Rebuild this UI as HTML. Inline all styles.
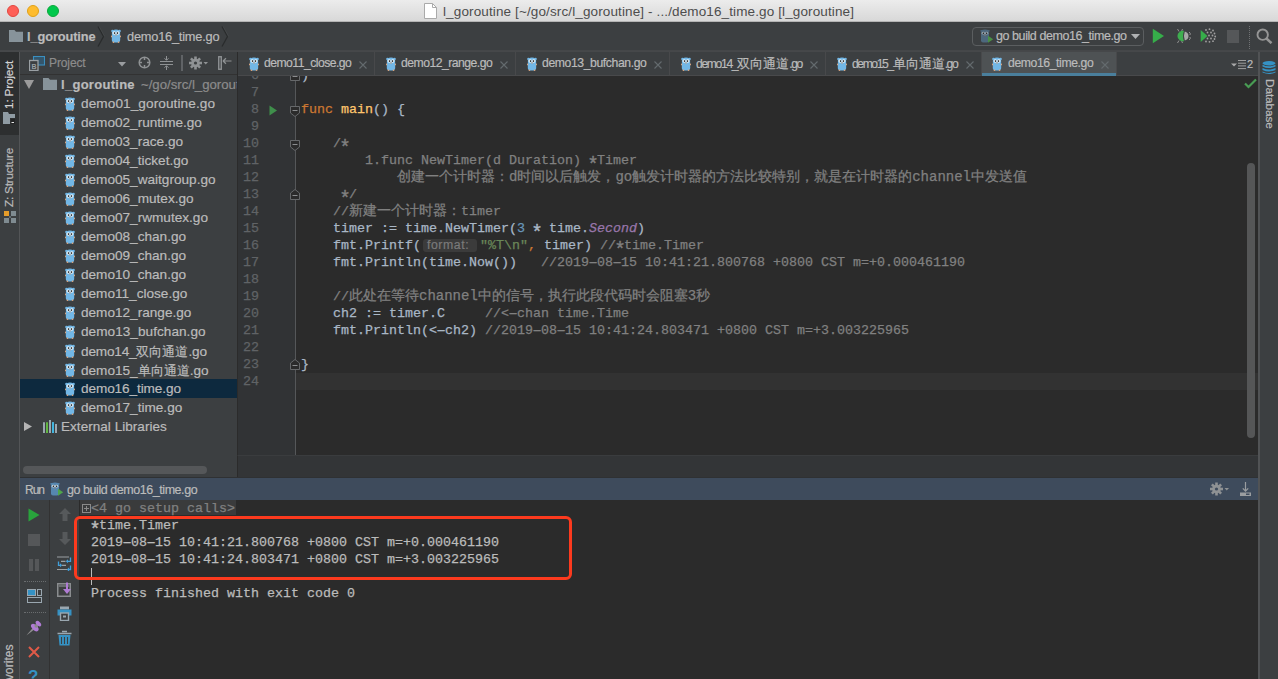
<!DOCTYPE html><html><head><meta charset="utf-8"><style>
*{margin:0;padding:0;box-sizing:border-box}
html,body{width:1278px;height:679px;overflow:hidden;background:#3c3f41;font-family:"Liberation Sans",sans-serif;font-size:13px;color:#bbbbbb}
.a{position:absolute}
.m{font-family:"Liberation Mono",monospace;font-size:13.33px;white-space:pre;-webkit-text-stroke:0.25px}
.nw{white-space:nowrap;-webkit-text-stroke:0.2px}
#title{left:0;top:0;width:1278px;height:22px;background:linear-gradient(#ececec,#d8d8d8);border-bottom:1px solid #b4b4b4}
.tl{width:12px;height:12px;border-radius:50%;top:5px}
#nav{left:0;top:22px;width:1278px;height:29px;background:#3c3f41;border-bottom:1px solid #454749}
#lstrip{left:0;top:51px;width:20px;height:628px;background:#3c3f41;border-right:1px solid #535557}
#proj{left:20px;top:51px;width:218px;height:427px;background:#3c3f41;border-right:1px solid #2b2b2b;overflow:hidden}
#tabs{left:238px;top:51px;width:1020px;height:25px;background:#3c3f41;border-bottom:1px solid #48494b}
#gutter{left:238px;top:76px;width:58px;height:379px;background:#313335;overflow:hidden}
#editor{left:296px;top:76px;width:962px;height:379px;background:#2b2b2b;overflow:hidden}
#edbottom{left:237px;top:455px;width:1021px;height:23px;background:#333537;border-top:1px solid #3a3c3e;border-left:1px solid #2b2b2b}
#rstrip{left:1258px;top:51px;width:20px;height:628px;background:#3c3f41;border-left:2px solid #515355}
#runhdr{left:20px;top:477px;width:1238px;height:23px;background:#3e4b5c;border-top:1px solid #2f3133}
#runtb1{left:20px;top:500px;width:30px;height:179px;background:#3c3f41;border-right:1px solid #323232}
#runtb2{left:50px;top:500px;width:29px;height:179px;background:#3c3f41}
#console{left:79px;top:500px;width:1179px;height:179px;background:#2b2b2b;overflow:hidden}
.kw{color:#cc7832}.fn{color:#ffc66d}.tx{color:#a9b7c6}.cm{color:#808080}.nu{color:#6897bb}.st{color:#6a8759}.it{color:#9876aa;font-style:italic}
.cjk{font-size:14px}
.ast{display:inline-block;width:8px;text-align:center;transform:translateY(5.5px) scale(1.45)}
.hy{display:inline-block;width:8px;text-align:center;transform:scaleX(1.9)}
</style></head><body>
<svg width="0" height="0" style="position:absolute"><defs><symbol id="g" viewBox="0 0 10 14">
<circle cx="1.4" cy="1.9" r="1.2" fill="#72b7e6"/><circle cx="8.6" cy="1.9" r="1.2" fill="#72b7e6"/>
<path d="M0.9 3.2Q0.9 0.4 5 0.4Q9.1 0.4 9.1 3.2L9.2 11Q9.2 13.6 5 13.6Q0.8 13.6 0.8 11Z" fill="#72b7e6"/>
<circle cx="3.2" cy="4" r="1.7" fill="#eef6fb"/><circle cx="6.8" cy="4" r="1.7" fill="#eef6fb"/>
<circle cx="3.5" cy="4.1" r="0.8" fill="#151515"/><circle cx="6.5" cy="4.1" r="0.8" fill="#151515"/>
<ellipse cx="5" cy="5.9" rx="1" ry="0.7" fill="#c9a58a"/>
<rect x="0" y="6.6" width="1.1" height="1.6" rx="0.5" fill="#d9a57f"/><rect x="8.9" y="6.6" width="1.1" height="1.6" rx="0.5" fill="#d9a57f"/>
<rect x="1.6" y="12.5" width="1.6" height="1.4" rx="0.6" fill="#d9a57f"/><rect x="6.8" y="12.5" width="1.6" height="1.4" rx="0.6" fill="#d9a57f"/>
</symbol>
<symbol id="gd" viewBox="0 0 14 14">
<path d="M1 2.4Q1 0.4 5 0.4Q9 0.4 9 2.4V11.4Q9 13.6 5 13.6Q1 13.6 1 11.4Z" fill="#4d687d"/>
<circle cx="1.2" cy="1.8" r="0.9" fill="#4d687d"/><circle cx="8.8" cy="1.8" r="0.9" fill="#4d687d"/>
<ellipse cx="3.3" cy="4.2" rx="1.6" ry="1.4" fill="#9aa6ae"/><ellipse cx="6.7" cy="4.2" rx="1.6" ry="1.4" fill="#9aa6ae"/>
<circle cx="3.4" cy="4.3" r="0.7" fill="#1a1a1a"/><circle cx="6.6" cy="4.3" r="0.7" fill="#1a1a1a"/>
<rect x="4.2" y="5.4" width="1.6" height="1.1" rx="0.5" fill="#9a8070"/>
<path d="M8 6.8L13.2 10.3L8 13.8Z" fill="#4a8f45"/>
</symbol>
<symbol id="gr" viewBox="0 0 14 14">
<path d="M1 2.4Q1 0.4 5 0.4Q9 0.4 9 2.4V11.4Q9 13.6 5 13.6Q1 13.6 1 11.4Z" fill="#5687b0"/>
<circle cx="1.2" cy="1.8" r="0.9" fill="#5687b0"/><circle cx="8.8" cy="1.8" r="0.9" fill="#5687b0"/>
<ellipse cx="3.3" cy="4.2" rx="1.6" ry="1.4" fill="#c8d4dc"/><ellipse cx="6.7" cy="4.2" rx="1.6" ry="1.4" fill="#c8d4dc"/>
<circle cx="3.4" cy="4.3" r="0.7" fill="#1a1a1a"/><circle cx="6.6" cy="4.3" r="0.7" fill="#1a1a1a"/>
<rect x="4.2" y="5.4" width="1.6" height="1.1" rx="0.5" fill="#9a8070"/>
<path d="M8 6.8L13.2 10.3L8 13.8Z" fill="#4fa64a"/>
</symbol>
<symbol id="folder" viewBox="0 0 14 12">
<path d="M0 0H5.5L7 1.8H14V12H0Z" fill="#87939a"/>
</symbol></defs></svg>
<div id="title" class="a">
<div class="a tl" style="left:7px;background:#fe5f57;border:0.5px solid #e2463f"></div>
<div class="a tl" style="left:27px;background:#febc2e;border:0.5px solid #e1a116"></div>
<div class="a tl" style="left:47px;background:#00c84b;border:0.5px solid #0ba73a"></div>
<svg class="a" style="left:424px;top:3px" width="13" height="16" viewBox="0 0 13 16"><path d="M0.5 0.5H8.5L12.5 4.5V15.5H0.5Z" fill="#fff" stroke="#aaa"/><path d="M8.5 0.5V4.5H12.5" fill="none" stroke="#aaa"/></svg>

<div id="f0" class="a nw" style="left:443px;top:4px;font-size:13.5px;color:#4d4d4d;-webkit-text-stroke:0;letter-spacing:0.123px">l_goroutine [~/go/src/l_goroutine] - .../demo16_time.go [l_goroutine]</div>
</div>
<div id="nav" class="a">
<svg class="a" style="left:9px;top:8px" width="14" height="12"><use href="#folder"/></svg>
<div id="f1" class="a nw" style="left:27px;top:7px;font-size:12.8px;font-weight:bold;letter-spacing:-0.107px">l_goroutine</div>
<svg class="a" style="left:97px;top:4px" width="8" height="21" viewBox="0 0 8 21"><path d="M1 0.5L6.5 10.5L1 20.5" fill="none" stroke="#2a2c2d" stroke-width="1.3"/><path d="M2.2 0.5L7.7 10.5" fill="none" stroke="#4a4d4f" stroke-width="0.6"/></svg>
<svg class="a" style="left:111px;top:7px" width="10" height="14"><use href="#g"/></svg>
<div id="f2" class="a nw" style="left:127px;top:7px;font-size:12.8px;letter-spacing:-0.218px">demo16_time.go</div>
<svg class="a" style="left:221px;top:4px" width="8" height="21" viewBox="0 0 8 21"><path d="M1 0.5L6.5 10.5L1 20.5" fill="none" stroke="#2a2c2d" stroke-width="1.3"/><path d="M2.2 0.5L7.7 10.5" fill="none" stroke="#4a4d4f" stroke-width="0.6"/></svg>
<div class="a" style="left:972px;top:5px;width:172px;height:19px;border:1px solid #5b5e60;border-radius:4px;background:#3c3f41"></div>
<svg class="a" style="left:980px;top:7px" width="14" height="14"><use href="#gd"/></svg>
<div id="f3" class="a nw" style="left:996px;top:7px;font-size:12.5px;letter-spacing:-0.426px">go build demo16_time.go</div>
<svg class="a" style="left:1131px;top:12px" width="9" height="6"><path d="M0 0H9L4.5 5Z" fill="#afb1b3"/></svg>
<svg class="a" style="left:1152px;top:6px" width="13" height="16" viewBox="0 0 13 16"><path d="M0.8 0.8L12 8L0.8 15.2Z" fill="#36ad4a"/></svg>
<svg class="a" style="left:1174px;top:6px" width="18" height="16" viewBox="0 0 18 16">
<path d="M3.5 1L5 3.5M8.5 1L7.5 3.5M3.5 15L5 12.5M8.5 15L7.5 12.5" stroke="#9a9a9a" stroke-width="0.9"/>
<path d="M15 4Q17 5 16 7M15 12Q17 11 16 9" fill="none" stroke="#9a9a9a" stroke-width="0.9"/>
<path d="M10 2.8A5.5 5.3 0 1 0 10 13.2Q8 8 10 2.8Z" fill="#3eae4f"/>
<path d="M10.8 3.5Q9 8 10.8 12.5Q14.5 11.5 14.5 8Q14.5 4.5 10.8 3.5Z" fill="#a8a8a8"/>
</svg>
<svg class="a" style="left:1200px;top:6px" width="17" height="16" viewBox="0 0 17 16">
<g fill="#a0a0a0"><circle cx="6" cy="2" r="0.9"/><circle cx="9.5" cy="1.2" r="0.9"/><circle cx="13" cy="2.5" r="0.9"/>
<circle cx="7.5" cy="4.5" r="0.9"/><circle cx="11" cy="4.5" r="0.9"/><circle cx="14.5" cy="5.5" r="0.9"/>
<circle cx="9" cy="7.5" r="0.9"/><circle cx="12.5" cy="7.5" r="0.9"/><circle cx="15.2" cy="8.5" r="0.9"/>
<circle cx="7.5" cy="10.5" r="0.9"/><circle cx="11" cy="10.5" r="0.9"/><circle cx="14.5" cy="11" r="0.9"/>
<circle cx="6" cy="13.5" r="0.9"/><circle cx="9.5" cy="13.8" r="0.9"/><circle cx="13" cy="13.2" r="0.9"/></g>
<path d="M0.7 2L7.5 8L0.7 14Z" fill="#36ad4a"/></svg>
<div class="a" style="left:1227px;top:8px;width:12px;height:13px;background:#555759"></div>
<div class="a" style="left:1249px;top:4px;width:1px;height:23px;border-left:1px dotted #707274"></div>
<svg class="a" style="left:1256px;top:6px" width="17" height="16" viewBox="0 0 17 16"><circle cx="6.7" cy="6.7" r="5.2" fill="none" stroke="#959595" stroke-width="1.9"/><path d="M10.5 10.5L15.5 15.2" stroke="#959595" stroke-width="2.5"/></svg>
</div>
<div id="lstrip" class="a">
<div class="a" style="left:0;top:0;width:19px;height:84px;background:#2d2f30"></div>
<div id="f4" class="a nw" style="left:3px;top:58px;transform-origin:0 0;transform:rotate(-90deg);font-size:11.8px;color:#d4d4d4;line-height:13px;letter-spacing:-0.183px">1: Project</div>
<svg class="a" style="left:3px;top:61px" width="13" height="12"><path d="M0 0H5L6 2H12V6H7V12H0Z" fill="#8f9ba3"/><rect x="8" y="7" width="4" height="5" fill="#232425"/><rect x="8.5" y="10" width="2.5" height="1" fill="#e6e6e6"/></svg>
<div id="f5" class="a nw" style="left:3px;top:156px;transform-origin:0 0;transform:rotate(-90deg);font-size:11.8px;color:#bbbbbb;line-height:13px;letter-spacing:-0.220px">Z: Structure</div>
<svg class="a" style="left:4px;top:160px" width="12" height="12" viewBox="0 0 12 12"><rect x="0" y="0" width="5" height="5" fill="#e59c2a"/><rect x="7" y="0" width="5" height="5" fill="#7f8b91"/><rect x="0" y="7" width="5" height="5" fill="#7f8b91"/><rect x="7" y="7" width="5" height="5" fill="#7f8b91"/><path d="M5 5L7 7M7 5L5 7" stroke="#5f6a70" stroke-width="1"/></svg>
<div class="a nw" style="left:3px;top:657px;transform-origin:0 0;transform:rotate(-90deg);font-size:12.2px;color:#bbbbbb;line-height:13px">2: Favorites</div>
</div>
<div id="proj" class="a">
<div class="a" style="left:0;top:0;width:217px;height:24px;border-bottom:1px solid #323232"></div>
<svg class="a" style="left:9px;top:5px" width="16" height="15" viewBox="0 0 16 15"><rect x="4.5" y="0.5" width="11" height="8.5" fill="#34556b" stroke="#3a8fc0" stroke-width="1.1"/><rect x="0.5" y="4.5" width="8.5" height="10" fill="#3c3f41" stroke="#9aa0a4" stroke-width="1.3"/><text x="2.4" y="12.6" font-family="Liberation Sans" font-weight="bold" font-size="7" fill="#9aa0a4">B</text></svg>
<div id="f6" class="a nw" style="left:29px;top:5px;font-size:12px;color:#8c8c8c;letter-spacing:-0.110px">Project</div>
<svg class="a" style="left:98px;top:11px" width="8" height="5"><path d="M0 0H8L4 4.5Z" fill="#9a9da0"/></svg>
<svg class="a" style="left:118px;top:5px" width="13" height="13" viewBox="0 0 13 13"><circle cx="6.5" cy="6.5" r="5.3" fill="none" stroke="#8f9294" stroke-width="1.5"/><path d="M6.5 1V4M6.5 9V12M1 6.5H4M9 6.5H12" stroke="#8f9294" stroke-width="1.5"/></svg>
<svg class="a" style="left:140px;top:5px" width="13" height="14" viewBox="0 0 13 14"><path d="M0 5.5H13M0 8.5H13M6.5 0V4M6.5 10V14M4.5 2.3L6.5 4.3L8.5 2.3M4.5 11.7L6.5 9.7L8.5 11.7" fill="none" stroke="#8f9294" stroke-width="1"/></svg>
<div class="a" style="left:161px;top:4px;width:2px;height:16px;background:#606366"></div>
<svg class="a" style="left:169px;top:5px" width="20" height="14" viewBox="0 0 20 14"><g transform="translate(6.5 7)"><circle r="4.3" fill="#8f9294"/><g fill="#8f9294"><rect x="-1.3" y="-6.5" width="2.6" height="13"/><rect x="-1.3" y="-6.5" width="2.6" height="13" transform="rotate(45)"/><rect x="-1.3" y="-6.5" width="2.6" height="13" transform="rotate(90)"/><rect x="-1.3" y="-6.5" width="2.6" height="13" transform="rotate(135)"/></g><circle r="1.6" fill="#3c3f41"/></g><path d="M14.5 6H19L16.75 8.5Z" fill="#8f9294"/></svg>
<svg class="a" style="left:198px;top:5px" width="14" height="14" viewBox="0 0 14 14"><rect x="0.75" y="0.75" width="2.5" height="12.5" fill="none" stroke="#8f9294" stroke-width="1.4"/><path d="M5 5H13.5M5 5L8 2.2M5 5L8 7.8" fill="none" stroke="#8f9294" stroke-width="1.2"/></svg>
<div class="a" style="left:0;top:328px;width:217px;height:19px;background:#0d293e"></div>
<svg class="a" style="left:4px;top:29px" width="10" height="9"><path d="M0 0H10L5 9Z" fill="#9b9b9b"/></svg>
<svg class="a" style="left:23px;top:27px" width="14" height="12"><use href="#folder"/></svg>
<div id="f7" class="a nw" style="left:41px;top:26px;font-size:13px;font-weight:bold;color:#bbbbbb;letter-spacing:0.282px">l_goroutine</div>
<div class="a nw" style="left:121px;top:26px;font-size:13.2px;color:#8c8c8c">~/go/src/l_goroutine</div>
<svg class="a" style="left:45px;top:46px" width="10" height="14"><use href="#g"/></svg>
<div id="f8" class="a nw" style="left:61px;top:45px;font-size:13.6px;letter-spacing:0.095px">demo01_goroutine.go</div>
<svg class="a" style="left:45px;top:65px" width="10" height="14"><use href="#g"/></svg>
<div class="a nw" style="left:61px;top:64px;font-size:13.6px">demo02_runtime.go</div>
<svg class="a" style="left:45px;top:84px" width="10" height="14"><use href="#g"/></svg>
<div class="a nw" style="left:61px;top:83px;font-size:13.6px">demo03_race.go</div>
<svg class="a" style="left:45px;top:103px" width="10" height="14"><use href="#g"/></svg>
<div class="a nw" style="left:61px;top:102px;font-size:13.6px">demo04_ticket.go</div>
<svg class="a" style="left:45px;top:122px" width="10" height="14"><use href="#g"/></svg>
<div class="a nw" style="left:61px;top:121px;font-size:13.6px">demo05_waitgroup.go</div>
<svg class="a" style="left:45px;top:141px" width="10" height="14"><use href="#g"/></svg>
<div class="a nw" style="left:61px;top:140px;font-size:13.6px">demo06_mutex.go</div>
<svg class="a" style="left:45px;top:160px" width="10" height="14"><use href="#g"/></svg>
<div class="a nw" style="left:61px;top:159px;font-size:13.6px">demo07_rwmutex.go</div>
<svg class="a" style="left:45px;top:179px" width="10" height="14"><use href="#g"/></svg>
<div class="a nw" style="left:61px;top:178px;font-size:13.6px">demo08_chan.go</div>
<svg class="a" style="left:45px;top:198px" width="10" height="14"><use href="#g"/></svg>
<div class="a nw" style="left:61px;top:197px;font-size:13.6px">demo09_chan.go</div>
<svg class="a" style="left:45px;top:217px" width="10" height="14"><use href="#g"/></svg>
<div class="a nw" style="left:61px;top:216px;font-size:13.6px">demo10_chan.go</div>
<svg class="a" style="left:45px;top:236px" width="10" height="14"><use href="#g"/></svg>
<div class="a nw" style="left:61px;top:235px;font-size:13.6px">demo11_close.go</div>
<svg class="a" style="left:45px;top:255px" width="10" height="14"><use href="#g"/></svg>
<div class="a nw" style="left:61px;top:254px;font-size:13.6px">demo12_range.go</div>
<svg class="a" style="left:45px;top:274px" width="10" height="14"><use href="#g"/></svg>
<div id="f9" class="a nw" style="left:61px;top:273px;font-size:13.6px;letter-spacing:0.039px">demo13_bufchan.go</div>
<svg class="a" style="left:45px;top:293px" width="10" height="14"><use href="#g"/></svg>
<div id="f10" class="a nw" style="left:61px;top:292px;font-size:13.6px;letter-spacing:-0.177px">demo14_<span style="font-size:13px;letter-spacing:0">双向通道</span>.go</div>
<svg class="a" style="left:45px;top:312px" width="10" height="14"><use href="#g"/></svg>
<div class="a nw" style="left:61px;top:311px;font-size:13.6px">demo15_<span style="font-size:13px;letter-spacing:0">单向通道</span>.go</div>
<svg class="a" style="left:45px;top:331px" width="10" height="14"><use href="#g"/></svg>
<div id="f11" class="a nw" style="left:61px;top:330px;font-size:13.6px;letter-spacing:-0.097px">demo16_time.go</div>
<svg class="a" style="left:45px;top:350px" width="10" height="14"><use href="#g"/></svg>
<div class="a nw" style="left:61px;top:349px;font-size:13.6px">demo17_time.go</div>
<svg class="a" style="left:4px;top:371px" width="8" height="9"><path d="M0 0L8 4.5L0 9Z" fill="#b4b4b4"/></svg>
<svg class="a" style="left:23px;top:368px" width="14" height="15" viewBox="0 0 14 15"><path d="M1 3.3V14M10 3.3V14" stroke="#9aa7b0" stroke-width="2"/><path d="M7 1V14" stroke="#9aa7b0" stroke-width="2"/><path d="M13 5V14" stroke="#9aa7b0" stroke-width="2"/><path d="M4 3.3V14" stroke="#62b543" stroke-width="2"/><path d="M10 3.3V14" stroke="#40b6e0" stroke-width="2"/></svg>
<div id="f12" class="a nw" style="left:41px;top:368px;font-size:13.5px;letter-spacing:0.044px">External Libraries</div>
<div class="a" style="left:3px;top:415px;width:184px;height:8px;border-radius:4px;background:#555759"></div>
</div>
<div id="tabs" class="a"></div>
<div class="a" style="left:374px;top:52px;width:1px;height:23px;background:#48494b"></div>
<svg class="a" style="left:249px;top:57px" width="10" height="14"><use href="#g"/></svg>
<div id="f13" class="a nw" style="left:264px;top:56px;font-size:12.2px;letter-spacing:-0.537px">demo11_close.go</div>
<svg class="a" style="left:359px;top:61px" width="8" height="8"><path d="M0.5 0.5L7.5 7.5M7.5 0.5L0.5 7.5" stroke="#646b6e" stroke-width="1.1"/></svg>
<div class="a" style="left:515px;top:52px;width:1px;height:23px;background:#48494b"></div>
<svg class="a" style="left:386px;top:57px" width="10" height="14"><use href="#g"/></svg>
<div id="f14" class="a nw" style="left:401px;top:56px;font-size:12.2px;letter-spacing:-0.510px">demo12_range.go</div>
<svg class="a" style="left:500px;top:61px" width="8" height="8"><path d="M0.5 0.5L7.5 7.5M7.5 0.5L0.5 7.5" stroke="#646b6e" stroke-width="1.1"/></svg>
<div class="a" style="left:669px;top:52px;width:1px;height:23px;background:#48494b"></div>
<svg class="a" style="left:527px;top:57px" width="10" height="14"><use href="#g"/></svg>
<div id="f15" class="a nw" style="left:542px;top:56px;font-size:12.2px;letter-spacing:-0.396px">demo13_bufchan.go</div>
<svg class="a" style="left:654px;top:61px" width="8" height="8"><path d="M0.5 0.5L7.5 7.5M7.5 0.5L0.5 7.5" stroke="#646b6e" stroke-width="1.1"/></svg>
<div class="a" style="left:825px;top:52px;width:1px;height:23px;background:#48494b"></div>
<svg class="a" style="left:681px;top:57px" width="10" height="14"><use href="#g"/></svg>
<div id="f16" class="a nw" style="left:696px;top:56px;font-size:12.2px;letter-spacing:-1.376px">demo14_<span style="font-size:12.8px;letter-spacing:0">双向通道</span>.go</div>
<svg class="a" style="left:810px;top:61px" width="8" height="8"><path d="M0.5 0.5L7.5 7.5M7.5 0.5L0.5 7.5" stroke="#646b6e" stroke-width="1.1"/></svg>
<div class="a" style="left:981px;top:52px;width:1px;height:23px;background:#48494b"></div>
<svg class="a" style="left:837px;top:57px" width="10" height="14"><use href="#g"/></svg>
<div id="f17" class="a nw" style="left:852px;top:56px;font-size:12.2px;letter-spacing:-1.453px">demo15_<span style="font-size:12.8px;letter-spacing:0">单向通道</span>.go</div>
<svg class="a" style="left:966px;top:61px" width="8" height="8"><path d="M0.5 0.5L7.5 7.5M7.5 0.5L0.5 7.5" stroke="#646b6e" stroke-width="1.1"/></svg>
<div class="a" style="left:982px;top:51px;width:134px;height:24px;background:#4e5254"></div>
<div class="a" style="left:982px;top:73px;width:134px;height:3px;background:#4a7f9c"></div>
<div class="a" style="left:1116px;top:52px;width:1px;height:23px;background:#48494b"></div>
<svg class="a" style="left:992px;top:57px" width="10" height="14"><use href="#g"/></svg>
<div id="f18" class="a nw" style="left:1008px;top:56px;font-size:12.2px;letter-spacing:-0.392px">demo16_time.go</div>
<svg class="a" style="left:1101px;top:61px" width="8" height="8"><path d="M0.5 0.5L7.5 7.5M7.5 0.5L0.5 7.5" stroke="#646b6e" stroke-width="1.1"/></svg>
<svg class="a" style="left:1231px;top:59px" width="24" height="11" viewBox="0 0 24 11"><path d="M0 4.5H6L3 7.5Z" fill="#a9a9a9"/><path d="M7 1.5H15M7 4.2H15M7 6.9H15M7 9.6H15" stroke="#a9a9a9" stroke-width="0.9"/></svg>
<div class="a nw" style="left:1247px;top:58px;font-size:11px;color:#bbbbbb">2</div>
<div id="gutter" class="a">
<div class="a m" style="left:0;width:21px;text-align:right;top:-9px;height:17px;line-height:17px;color:#606366">6</div>
<div class="a m" style="left:0;width:21px;text-align:right;top:8px;height:17px;line-height:17px;color:#606366">7</div>
<div class="a m" style="left:0;width:21px;text-align:right;top:25px;height:17px;line-height:17px;color:#606366">8</div>
<div class="a m" style="left:0;width:21px;text-align:right;top:42px;height:17px;line-height:17px;color:#606366">9</div>
<div class="a m" style="left:0;width:21px;text-align:right;top:59px;height:17px;line-height:17px;color:#606366">10</div>
<div class="a m" style="left:0;width:21px;text-align:right;top:76px;height:17px;line-height:17px;color:#606366">11</div>
<div class="a m" style="left:0;width:21px;text-align:right;top:93px;height:17px;line-height:17px;color:#606366">12</div>
<div class="a m" style="left:0;width:21px;text-align:right;top:110px;height:17px;line-height:17px;color:#606366">13</div>
<div class="a m" style="left:0;width:21px;text-align:right;top:127px;height:17px;line-height:17px;color:#606366">14</div>
<div class="a m" style="left:0;width:21px;text-align:right;top:144px;height:17px;line-height:17px;color:#606366">15</div>
<div class="a m" style="left:0;width:21px;text-align:right;top:161px;height:17px;line-height:17px;color:#606366">16</div>
<div class="a m" style="left:0;width:21px;text-align:right;top:178px;height:17px;line-height:17px;color:#606366">17</div>
<div class="a m" style="left:0;width:21px;text-align:right;top:195px;height:17px;line-height:17px;color:#606366">18</div>
<div class="a m" style="left:0;width:21px;text-align:right;top:212px;height:17px;line-height:17px;color:#606366">19</div>
<div class="a m" style="left:0;width:21px;text-align:right;top:229px;height:17px;line-height:17px;color:#606366">20</div>
<div class="a m" style="left:0;width:21px;text-align:right;top:246px;height:17px;line-height:17px;color:#606366">21</div>
<div class="a m" style="left:0;width:21px;text-align:right;top:263px;height:17px;line-height:17px;color:#606366">22</div>
<div class="a m" style="left:0;width:21px;text-align:right;top:280px;height:17px;line-height:17px;color:#606366">23</div>
<div class="a m" style="left:0;width:21px;text-align:right;top:297px;height:17px;line-height:17px;color:#606366">24</div>
<svg class="a" style="left:31px;top:29px" width="9" height="11"><path d="M0.5 0.5L8 5.5L0.5 10.5Z" fill="#3f8f4b"/></svg>
<div class="a" style="left:57px;top:0;width:1px;height:380px;background:#555759"></div>
</div>
<div id="editor" class="a">
<div class="a" style="left:0;top:297px;width:962px;height:17px;background:#323232"></div>
<div class="a m" style="left:5px;top:-9px;height:17px;line-height:17px"><span class="tx">)</span></div>
<div class="a m" style="left:5px;top:25px;height:17px;line-height:17px"><span class="kw">func</span> <span class="fn">main</span><span class="tx">() {</span></div>
<div class="a m" style="left:5px;top:59px;height:17px;line-height:17px">    <span class="cm">/<span class="ast">*</span></span></div>
<div class="a m" style="left:5px;top:76px;height:17px;line-height:17px">        <span class="cm">1.func NewTimer(d Duration) <span class="ast">*</span>Timer</span></div>
<div class="a m" style="left:5px;top:93px;height:17px;line-height:17px">            <span class="cm cjk">创建一个计时器：d时间以后触发，go触发计时器的方法比较特别，就是在计时器的channel中发送值</span></div>
<div class="a m" style="left:5px;top:110px;height:17px;line-height:17px">     <span class="cm"><span class="ast">*</span>/</span></div>
<div class="a m" style="left:5px;top:127px;height:17px;line-height:17px">    <span class="cm">//</span><span class="cm cjk">新建一个计时器：</span><span class="cm">timer</span></div>
<div class="a m" style="left:5px;top:144px;height:17px;line-height:17px">    <span class="tx">timer := time.NewTimer(</span><span class="nu">3</span><span class="tx"> <span class="ast">*</span> time.</span><span class="it">Second</span><span class="tx">)</span></div>
<div class="a m" style="left:5px;top:161px;height:17px;line-height:17px">    <span class="tx">fmt.Printf(</span><span style="display:inline-block;width:59px"></span><span class="st">&quot;%T\n&quot;</span><span class="kw">,</span><span class="tx"> timer) </span><span class="cm">//<span class="ast">*</span>time.Timer</span></div>
<div class="a m" style="left:5px;top:178px;height:17px;line-height:17px">    <span class="tx">fmt.Println(time.Now())</span>   <span class="cm">//2019<span class="hy">-</span>08<span class="hy">-</span>15 10:41:21.800768 +0800 CST m=+0.000461190</span></div>
<div class="a m" style="left:5px;top:212px;height:17px;line-height:17px">    <span class="cm">//</span><span class="cm cjk">此处在等待channel中的信号，执行此段代码时会阻塞3秒</span></div>
<div class="a m" style="left:5px;top:229px;height:17px;line-height:17px">    <span class="tx">ch2 := timer.C</span>     <span class="cm">//&lt;<span class="hy">-</span>chan time.Time</span></div>
<div class="a m" style="left:5px;top:246px;height:17px;line-height:17px">    <span class="tx">fmt.Println(&lt;<span class="hy">-</span>ch2)</span> <span class="cm">//2019<span class="hy">-</span>08<span class="hy">-</span>15 10:41:24.803471 +0800 CST m=+3.003225965</span></div>
<div class="a m" style="left:5px;top:280px;height:17px;line-height:17px"><span class="tx">}</span></div>
<div class="a nw" style="left:127px;top:163px;width:54px;height:13px;border-radius:3px;background:#3b3b3b;color:#7a7a7a;font-size:12.3px;line-height:13px;padding-left:4px;letter-spacing:0.55px">format:</div>
<svg class="a" style="left:948px;top:2px" width="13" height="11"><path d="M1 5.5L4.5 9L12 1.5" fill="none" stroke="#499c54" stroke-width="2.2"/></svg>
<div class="a" style="left:951px;top:87px;width:8px;height:275px;border-radius:4px;background:#555657"></div>
</div>
<div class="a" style="left:238px;top:76px;width:80px;height:379px;overflow:hidden">
<svg class="a" style="left:52px;top:-6px" width="10" height="11" viewBox="0 0 10 11"><path d="M0.5 10.5H9.5V4L5 0.5L0.5 4Z" fill="#2b2b2b" stroke="#66686a" stroke-width="1"/><path d="M2.5 6.5H7.5" stroke="#8a8c8e" stroke-width="1"/></svg>
<svg class="a" style="left:52px;top:30px" width="10" height="11" viewBox="0 0 10 11"><path d="M0.5 0.5H9.5V7L5 10.5L0.5 7Z" fill="#2b2b2b" stroke="#66686a" stroke-width="1"/><path d="M2.5 4.5H7.5" stroke="#8a8c8e" stroke-width="1"/></svg>
<svg class="a" style="left:52px;top:64px" width="10" height="11" viewBox="0 0 10 11"><path d="M0.5 0.5H9.5V7L5 10.5L0.5 7Z" fill="#2b2b2b" stroke="#66686a" stroke-width="1"/><path d="M2.5 4.5H7.5" stroke="#8a8c8e" stroke-width="1"/></svg>
<svg class="a" style="left:52px;top:113px" width="10" height="11" viewBox="0 0 10 11"><path d="M0.5 10.5H9.5V4L5 0.5L0.5 4Z" fill="#2b2b2b" stroke="#66686a" stroke-width="1"/><path d="M2.5 6.5H7.5" stroke="#8a8c8e" stroke-width="1"/></svg>
<svg class="a" style="left:52px;top:283px" width="10" height="11" viewBox="0 0 10 11"><path d="M0.5 10.5H9.5V4L5 0.5L0.5 4Z" fill="#2b2b2b" stroke="#66686a" stroke-width="1"/><path d="M2.5 6.5H7.5" stroke="#8a8c8e" stroke-width="1"/></svg>
</div>
<div id="edbottom" class="a"></div>
<div id="rstrip" class="a">
<svg class="a" style="left:2px;top:10px" width="14" height="14" viewBox="0 0 14 14"><ellipse cx="7" cy="2.3" rx="6.5" ry="2.2" fill="#3592c4"/><path d="M0.5 3.8Q7 6.8 13.5 3.8V5.6Q7 8.6 0.5 5.6Z" fill="#3592c4"/><path d="M0.5 7.1Q7 10.1 13.5 7.1V8.9Q7 11.9 0.5 8.9Z" fill="#3592c4"/><path d="M0.5 10.4Q7 13.4 13.5 10.4V11.6Q7 14.4 0.5 11.6Z" fill="#3592c4"/></svg>
<div id="f19" class="a nw" style="left:16px;top:28px;transform-origin:0 0;transform:rotate(90deg);font-size:11.8px;color:#bbbbbb;line-height:13px;letter-spacing:-0.100px">Database</div>
</div>
<div id="runhdr" class="a">
<div id="f20" class="a nw" style="left:5px;top:5px;font-size:12px;color:#bbbbbb;letter-spacing:-1.008px">Run</div>
<svg class="a" style="left:30px;top:4px" width="14" height="14"><use href="#gr"/></svg>
<div id="f21" class="a nw" style="left:47px;top:5px;font-size:12.5px;color:#bbbbbb;letter-spacing:-0.444px">go build demo16_time.go</div>
<svg class="a" style="left:1190px;top:4px" width="20" height="14" viewBox="0 0 20 14"><g transform="translate(6.5 7)"><circle r="4.3" fill="#8f9294"/><g fill="#8f9294"><rect x="-1.3" y="-6.5" width="2.6" height="13"/><rect x="-1.3" y="-6.5" width="2.6" height="13" transform="rotate(45)"/><rect x="-1.3" y="-6.5" width="2.6" height="13" transform="rotate(90)"/><rect x="-1.3" y="-6.5" width="2.6" height="13" transform="rotate(135)"/></g><circle r="1.6" fill="#3e4b5c"/></g><path d="M14.5 6H19L16.75 8.5Z" fill="#8f9294"/></svg>
<svg class="a" style="left:1219px;top:4px" width="13" height="15" viewBox="0 0 13 15"><path d="M6.5 0V9M3.8 6.3L6.5 9.2L9.2 6.3" fill="none" stroke="#9a9da0" stroke-width="1.2"/><rect x="1" y="10.5" width="11" height="3.5" fill="#9a9da0"/><rect x="7" y="11.5" width="3.5" height="1.5" fill="#3e4b5c"/></svg>
</div>
<div id="runtb1" class="a">
<svg class="a" style="left:8px;top:8px" width="12" height="14"><path d="M0.5 0.5L11.5 7L0.5 13.5Z" fill="#29a33c"/></svg>
<div class="a" style="left:8px;top:34px;width:12px;height:12px;background:#555759"></div>
<div class="a" style="left:9px;top:59px;width:4px;height:12px;background:#555759"></div><div class="a" style="left:15px;top:59px;width:4px;height:12px;background:#555759"></div>
<div class="a" style="left:4px;top:81px;width:22px;height:1px;border-top:1px dotted #6a6d6f"></div>
<svg class="a" style="left:7px;top:89px" width="15" height="14" viewBox="0 0 15 14"><rect x="0.5" y="0.5" width="8" height="6" fill="#3592c4" stroke="#9aa7b0"/><rect x="10.5" y="0.5" width="4" height="6" fill="none" stroke="#9aa7b0"/><rect x="0.5" y="8.5" width="14" height="5" fill="none" stroke="#9aa7b0"/></svg>
<div class="a" style="left:4px;top:112px;width:22px;height:1px;border-top:1px dotted #6a6d6f"></div>
<svg class="a" style="left:6px;top:120px" width="16" height="16" viewBox="0 0 16 16"><path d="M0.3 15.5L6.5 8.3L8 9.8Z" fill="#8f8f8f"/><ellipse cx="8.8" cy="7.6" rx="4.6" ry="2.6" transform="rotate(45 8.8 7.6)" fill="#b07cd4"/><circle cx="10.3" cy="5.9" r="1.8" fill="#8a8a8a"/><ellipse cx="12.4" cy="3.6" rx="3.3" ry="2" transform="rotate(45 12.4 3.6)" fill="#b07cd4"/></svg>
<svg class="a" style="left:8px;top:146px" width="12" height="12"><path d="M1 1L11 11M11 1L1 11" stroke="#e05a48" stroke-width="2"/></svg>
<div class="a" style="left:8px;top:167px;font-size:17px;font-weight:bold;color:#3592c4">?</div>
</div>
<div id="runtb2" class="a">
<svg class="a" style="left:8px;top:7px" width="14" height="15" viewBox="0 0 14 15"><path d="M7 1L13 7H9.5V14H4.5V7H1Z" fill="#56595b"/></svg>
<svg class="a" style="left:8px;top:31px" width="14" height="15" viewBox="0 0 14 15"><path d="M7 14L13 8H9.5V1H4.5V8H1Z" fill="#56595b"/></svg>
<svg class="a" style="left:7px;top:56px" width="16" height="15" viewBox="0 0 16 15"><path d="M0 1H12M4 5.3H8.5M5 9.3H9M0 13.5H10" stroke="#9aa0a4" stroke-width="1.2"/><g fill="none" stroke="#40a0dc" stroke-width="1.3"><path d="M13.5 1.5V5.3H10"/><path d="M1.5 5.5V9.3H4"/><path d="M13.5 9.5V13.5H11"/></g><g fill="#40a0dc"><path d="M8.8 5.3L11 3.3V7.3Z"/><path d="M5.2 9.3L3 7.3V11.3Z"/><path d="M9.8 13.5L12 11.5V15.5Z"/></g></svg>
<svg class="a" style="left:7px;top:82px" width="15" height="15" viewBox="0 0 15 15"><rect x="0.75" y="1.75" width="12.5" height="12.5" fill="#3d3f40" stroke="#8a8d8f" stroke-width="1.5"/><rect x="1.5" y="2.5" width="11" height="2.5" fill="#6a6d6f"/><path d="M10 0.5V8" stroke="#b07cd4" stroke-width="2"/><path d="M6 7H14L10 12Z" fill="#b07cd4"/></svg>
<svg class="a" style="left:7px;top:106px" width="15" height="15" viewBox="0 0 15 15"><rect x="3" y="0.5" width="9" height="3" fill="#9aa7b0"/><rect x="0.5" y="3.5" width="14" height="6" fill="#3592c4"/><rect x="3.5" y="7" width="8" height="7.5" fill="#3c3f41" stroke="#9aa7b0" stroke-width="1.4"/><rect x="6" y="9.5" width="3" height="2" fill="#9aa7b0"/></svg>
<svg class="a" style="left:7px;top:130px" width="15" height="16" viewBox="0 0 15 16"><path d="M5 1.5H10M0.5 3.5H14.5" stroke="#9aa7b0" stroke-width="1.5"/><path d="M1.5 5H13.5L12.5 15.5H2.5Z" fill="#3592c4"/><path d="M4.5 7V14M7.5 7V14M10.5 7V14" stroke="#3c3f41" stroke-width="1.1"/></svg>
</div>
<div id="console" class="a">
<div class="a" style="left:1px;top:0;width:156px;height:15px;background:#3a3b3c"></div>
<svg class="a" style="left:3px;top:4px" width="9" height="9"><rect x="0.5" y="0.5" width="8" height="8" fill="none" stroke="#8a8a8a"/><path d="M2 4.5H7M4.5 2V7" stroke="#8a8a8a"/></svg>
<div class="a m" style="left:12px;top:0;height:17px;line-height:17px;color:#808080">&lt;4 go setup calls&gt;</div>
<div class="a m" style="left:12px;top:17px;height:17px;line-height:17px;color:#bbbbbb"><span class="ast">*</span>time.Timer</div>
<div class="a m" style="left:12px;top:34px;height:17px;line-height:17px;color:#bbbbbb">2019<span class="hy">-</span>08<span class="hy">-</span>15 10:41:21.800768 +0800 CST m=+0.000461190</div>
<div class="a m" style="left:12px;top:51px;height:17px;line-height:17px;color:#bbbbbb">2019<span class="hy">-</span>08<span class="hy">-</span>15 10:41:24.803471 +0800 CST m=+3.003225965</div>
<div class="a m" style="left:12px;top:68px;height:17px;line-height:17px;color:#bbbbbb"></div>
<div class="a m" style="left:12px;top:85px;height:17px;line-height:17px;color:#bbbbbb">Process finished with exit code 0</div>
<div class="a" style="left:12px;top:569px;width:1px;height:0"></div>
<div class="a" style="left:12px;top:68px;width:1px;height:17px;background:#bbbbbb"></div>
</div>
<div class="a" style="left:0;top:51px;width:1278px;height:1px;background:#46484a"></div>
<div class="a" style="left:74px;top:515.5px;width:498px;height:64px;border:3px solid #fc3a1e;border-radius:6px"></div>
</body></html>
